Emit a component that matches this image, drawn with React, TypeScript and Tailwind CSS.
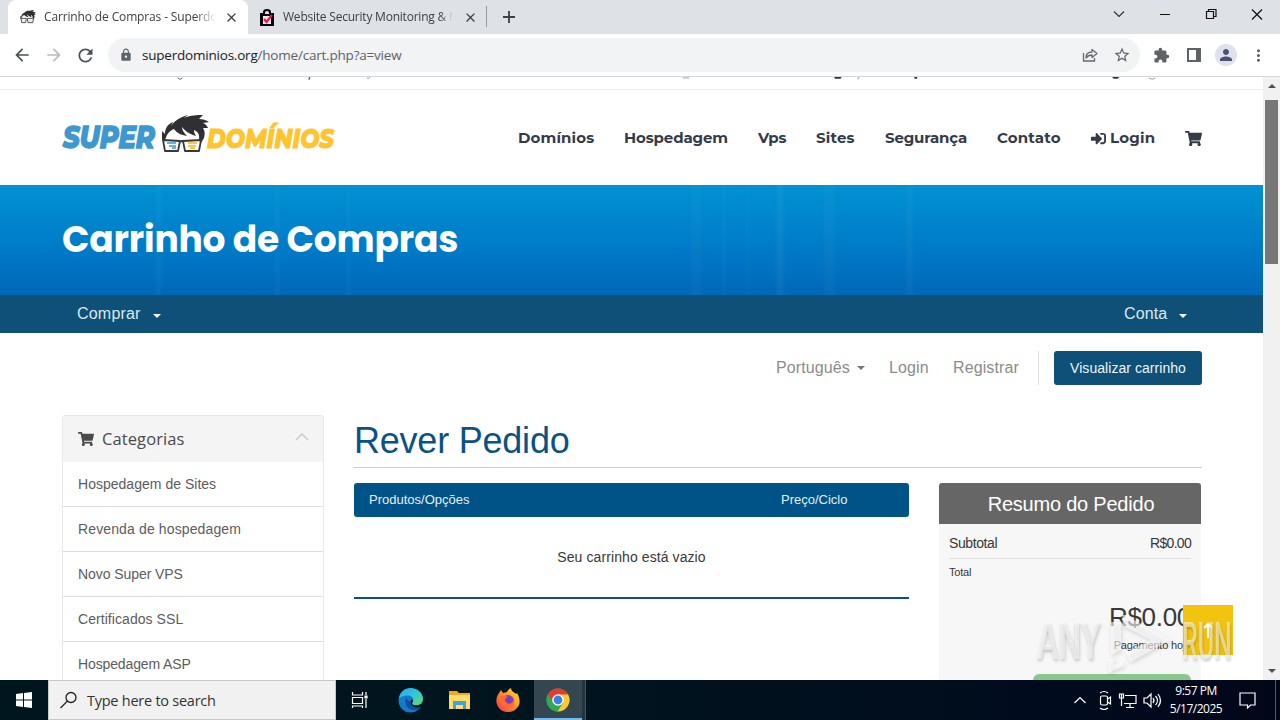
import React from "react";
import {
  MdArrowBack,
  MdArrowForward,
  MdClose,
  MdExtension,
  MdLock,
  MdMoreVert,
  MdPerson,
  MdRefresh,
  MdStarBorder,
} from "react-icons/md";
import { FaShoppingCart, FaSignInAlt } from "react-icons/fa";

const navItems = [
  { label: "Domínios", className: "w-[76px] tracking-[0.15px]" },
  { label: "Hospedagem", className: "w-[104px] tracking-[-0.12px]" },
  { label: "Vps", className: "w-[28px] tracking-[-0.3px]" },
  { label: "Sites", className: "w-[39px] tracking-[0.2px]" },
  { label: "Segurança", className: "w-[82px] tracking-[-0.15px]" },
  { label: "Contato", className: "w-[64px] tracking-[0.2px]" },
];

const categories = [
  { label: "Hospedagem de Sites", className: "tracking-[0.02px]" },
  { label: "Revenda de hospedagem", className: "tracking-[0.13px]" },
  { label: "Novo Super VPS", className: "tracking-[-0.07px]" },
  { label: "Certificados SSL", className: "tracking-[0.06px]" },
  { label: "Hospedagem ASP", className: "tracking-[-0.13px]" },
];

const Hair = () => (
  <path
    d="M1 26 L1 17 L4 20 C4 14 7 10 12 8 L10 12 C14 6 20 3 27 1 L23 4 C30 1 36 1 42 1 L38 5 C42 5 45 6 48 8 L42 9 C45 10 46 12 47 14 L42 14 C44 17 44 20 43 24 L40 29 L38 25 C39 20 36 17 33 16 C33 19 34 20 35 22 C28 20 24 17 21 13 C21 16 23 19 26 22 C20 21 16 19 13 15 C8 17 5 21 4 27 Z"
    fill="#303034"
  />
);

const Logo = () => (
  <svg width="290" height="42" viewBox="0 0 290 42" className="shrink-0">
    <text
      x="1"
      y="34"
      fontFamily="Montserrat, Inter, sans-serif"
      fontSize="30"
      fontWeight="800"
      fontStyle="italic"
      fill="#3d98d0"
      stroke="#3d98d0"
      strokeWidth="1.3"
      textLength="92"
      lengthAdjust="spacingAndGlyphs"
    >
      SUPER
    </text>
    <g transform="translate(99 0)">
      <Hair />
      <path
        d="M2 26 L19 27 L17 37 L4 37 Z M22 27 L40 26 L38 37 L24 37 Z M19 28 Q21 26 22 28"
        fill="#fff"
        stroke="#38383b"
        strokeWidth="1.8"
        strokeLinejoin="round"
      />
      <path d="M6 29h9M8 32h7M11 34h4" stroke="#64b5e6" strokeWidth="1.8" />
      <path d="M27 29h9M27 32h8M29 34h5" stroke="#fcc847" strokeWidth="1.8" />
    </g>
    <text
      x="145"
      y="34"
      fontFamily="Montserrat, Inter, sans-serif"
      fontSize="26.5"
      fontWeight="800"
      fontStyle="italic"
      fill="#ffc42e"
      stroke="#ffc42e"
      strokeWidth="0.9"
      textLength="127"
      lengthAdjust="spacingAndGlyphs"
    >
      DOMÍNIOS
    </text>
  </svg>
);

const TabStrip = () => (
  <div className="flex h-[34px] bg-[#dee1e6] pl-2 text-[12px] text-[#3c4043]">
    <div className="flex w-[240px] items-center rounded-t-lg bg-white pl-3">
      <svg width="16" height="16" viewBox="0 0 48 42" className="shrink-0">
        <Hair />
        <path d="M3 25h16l-2 13H5zM22 25h19l-3 13H24z" fill="#eee" stroke="#555" strokeWidth="3" />
      </svg>
      <div className="ml-2 w-[172px] overflow-hidden whitespace-nowrap tracking-[-0.14px] [mask-image:linear-gradient(to_right,black_88%,transparent)]">
        Carrinho de Compras - Superdominios
      </div>
      <MdClose size={15} className="ml-[8px] shrink-0" />
    </div>
    <div className="flex w-[239px] items-center border-r border-[#96999e] pl-[11px] [border-image:linear-gradient(to_bottom,transparent_20%,#96999e_20%_78%,transparent_78%)_1]">
      <svg width="16" height="17" viewBox="0 0 16 17" className="shrink-0">
        <path d="M1 4h3V3q0-3 4-3t4 3v1h3v13H1z" fill="#080808" />
        <path d="M6 5V3.500Q6 2 8 2t2 1.500V5z" fill="#dee1e6" />
        <path d="M4 7h8v8H4z" fill="#f5e6ea" />
        <path d="m5 10 2.500 3L13 6" fill="none" stroke="#e02249" strokeWidth="2.200" />
      </svg>
      <div className="ml-2 w-[170px] overflow-hidden whitespace-nowrap tracking-[-0.22px] [mask-image:linear-gradient(to_right,black_92%,transparent)]">
        Website Security Monitoring &amp; Malware
      </div>
      <MdClose size={15} className="ml-[10px] shrink-0" />
    </div>
    <div className="flex flex-1 items-center">
      <svg width="14" height="14" viewBox="0 0 14 14" className="ml-[15px]">
        <path d="M7 1v12M1 7h12" stroke="#3c4043" strokeWidth="1.800" />
      </svg>
    </div>
    <svg width="168" height="34" viewBox="0 0 168 34" fill="none" stroke="#111" className="shrink-0">
      <path d="m2 11.500 5 5 5-5" stroke="#333" strokeWidth="1.200" />
      <path d="M48 14.500h10" />
      <path d="M94.500 11.500h7v7h-7zM96.500 11V9.500h7.500v7h-2.500" strokeWidth="1.200" />
      <path d="m140 9.500 10 10M150 9.500l-10 10" strokeWidth="1.200" />
    </svg>
  </div>
);

const Toolbar = () => (
  <div className="flex h-[43px] items-center border-b border-[#d5d7d9] bg-white text-[#5f6368]">
    <MdArrowBack size={20} className="ml-3 shrink-0 text-[#4d5156]" />
    <MdArrowForward size={20} className="ml-3 shrink-0 text-[#b9bbbe]" />
    <MdRefresh size={21} className="ml-[11px] shrink-0 text-[#4d5156]" />
    <div className="ml-3 flex h-[34px] w-[1032px] items-center rounded-full bg-[#f1f3f4] pl-[11px]">
      <MdLock size={14} />
      <div className="ml-[9px] flex-1 whitespace-nowrap text-[13.500px] tracking-[-0.21px]">
        <span className="text-[#202124]">superdominios.org</span>/home/cart.php?a=view
      </div>
      <svg width="16" height="16" viewBox="0 0 16 16" fill="none" stroke="#666a6e" strokeWidth="1.300">
        <path d="M1.500 6v8h11v-3" />
        <path d="M4 11c0-4 2.500-6 6-6V2.500L15 6.500l-5 4V8C7 8 5.500 9 4 11z" strokeLinejoin="round" />
      </svg>
      <MdStarBorder size={18} className="mr-[9px] ml-[15px]" />
    </div>
    <MdExtension size={17} className="ml-[13px] shrink-0" />
    <svg width="14" height="14" viewBox="0 0 14 14" className="ml-[17px] shrink-0">
      <path d="M1 1h12v12H1z" fill="none" stroke="#5f6368" strokeWidth="2" />
      <path d="M9 1h4v12H9z" fill="#5f6368" />
    </svg>
    <div className="ml-[14px] flex size-[22px] shrink-0 items-center justify-center rounded-full bg-[#dfe1ec] text-[#4c5273]">
      <MdPerson size={18} />
    </div>
    <MdMoreVert size={19} className="ml-3 shrink-0" />
  </div>
);

/* bottom edge of the contact bar, nearly scrolled out of view */
const ContactBar = () => (
  <svg width="1263" height="13" viewBox="0 0 1263 13" className="block border-b border-[#ececec]">
    <path d="M140 1q3 3 5 0" fill="none" stroke="#555" />
    <path d="m283 0-1 3" stroke="#2f5fc4" strokeWidth="1.500" />
    <path d="M345 1q2 2 3-1M876 2q2 0 2-2M1192 1q4 3 7 0M687 1h7" fill="none" stroke="#999" />
    <path d="M851 0h8l-1 2h-6zM938 0h3v2h-3zM1152 0h8l-2 2h-4z" fill="#333" />
  </svg>
);

const SiteHeader = () => (
  <header className="flex h-[95px] items-center bg-white pl-[62px]">
    <div className="w-[456px] pb-[6px]">
      <Logo />
    </div>
    <nav className="flex items-center gap-[30px] pt-[2px] font-[Montserrat,Inter,sans-serif] text-[15px] font-bold whitespace-nowrap text-[#343a48]">
      {navItems.map((item) => (
        <a key={item.label} className={item.className}>
          {item.label}
        </a>
      ))}
      <a className="flex w-[64px] items-center gap-1">
        <FaSignInAlt size={15} className="shrink-0" />
        <span className="tracking-[0.2px]">Login</span>
      </a>
      <FaShoppingCart size={17} />
    </nav>
  </header>
);

const Banner = () => (
  <div className="flex h-[110px] items-center bg-[linear-gradient(90deg,transparent_154px,#ffffff07_157px_160px,transparent_163px_273px,#ffffff06_276px_278px,transparent_281px_345px,#ffffff05_347px_350px,transparent_352px_690px,#ffffff05_692px_700px,transparent_703px_722px,#ffffff08_724px,transparent_726px_745px,#ffffff05_747px,transparent_750px_774px,#ffffff0b_779px_781px,transparent_786px_822px,#ffffff07_826px_832px,transparent_836px_905px,#ffffff08_908px_911px,transparent_914px),linear-gradient(180deg,#0091d2_0%,#0083cc_38%,#0074c3_72%,#0068b7_100%)] pl-[62px]">
    <h1 className="font-[Poppins,Inter,sans-serif] text-[36px] font-bold tracking-[-0.18px] whitespace-nowrap text-white">
      Carrinho de Compras
    </h1>
  </div>
);

const Caret = ({ className }: { className?: string }) => (
  <span className={`border-x-4 border-t-4 border-x-transparent ${className}`} />
);

const AccountNav = () => (
  <div className="flex h-[38px] items-center justify-between bg-[#0e5077] pr-[76px] pl-[77px] text-base font-light text-[#dce9f0]">
    <div className="flex items-center">
      <span className="w-[76px] tracking-[0.2px]">Comprar</span>
      <Caret className="mt-[3px] border-t-white" />
    </div>
    <div className="flex items-center">
      <span className="w-[55px] tracking-[0.1px]">Conta</span>
      <Caret className="mt-[3px] border-t-white" />
    </div>
  </div>
);

const TopLinks = () => (
  <div className="mt-[18px] flex h-[34px] items-center whitespace-nowrap text-[#8c8c8c]">
    <div className="flex w-[113px] items-center">
      <span className="w-[81px] tracking-[0.1px]">Português</span>
      <Caret className="border-t-[#777]" />
    </div>
    <span className="w-[64px] tracking-[0.1px]">Login</span>
    <span className="w-[85px] tracking-[0.1px]">Registrar</span>
    <div className="h-[34px] w-[16px] border-l border-[#ddd]" />
    <button className="h-[34px] w-[148px] rounded-[3px] bg-[#0e5077] text-[14px] tracking-[0.05px] text-[#edf5fa]">
      Visualizar carrinho
    </button>
  </div>
);

const Categories = () => (
  <aside className="mt-[30px] h-[300px] w-[262px] rounded-t-[3px] border border-[#e8e8e8]">
    <div className="flex h-[46px] items-center bg-[#f4f4f4] pl-[15px] font-['Open_Sans',sans-serif] text-[#4b4b4b]">
      <FaShoppingCart size={16} />
      <span className="ml-2 w-[193px] text-[16.500px] tracking-[0.1px]">Categorias</span>
      <svg width="14" height="8" viewBox="0 0 14 8" className="mb-1">
        <path d="m1 7 6-6 6 6" fill="none" stroke="#ccc" strokeWidth="1.500" />
      </svg>
    </div>
    {categories.map((item) => (
      <div
        key={item.label}
        className="flex h-[45px] items-center border-b border-[#ddd] pl-[15px] text-[14px] text-[#5c5c5c]"
      >
        <span className={item.className}>{item.label}</span>
      </div>
    ))}
  </aside>
);

const CartTable = () => (
  <div className="w-[555px] border-b-2 border-[#0e5077]">
    <div className="flex h-[34px] items-center rounded-[3px] bg-[#005387] pl-[15px] text-[13px] text-[#e4eff6]">
      <span className="w-[412px]">Produtos/Opções</span>
      <span>Preço/Ciclo</span>
    </div>
    <div className="flex h-[80px] items-center justify-center text-[14px] tracking-[0.09px] text-[#383838]">
      Seu carrinho está vazio
    </div>
  </div>
);

const Summary = () => (
  <div className="h-[250px] w-[262px] rounded-[3px] bg-[#f7f7f7] text-[#383838]">
    <h2 className="flex h-[41px] items-center justify-center rounded-t-[3px] bg-[#666] pl-[2px] text-[20px] tracking-[-0.22px] text-white">
      Resumo do Pedido
    </h2>
    <div className="px-[10px]">
      <div className="flex h-[35px] items-center justify-between border-b border-[#ddd] pt-1 text-[14px]">
        <span className="tracking-[-0.4px]">Subtotal</span>
        <span className="tracking-[-0.7px]">R$0.00</span>
      </div>
      <div className="mt-[5px] text-[11px] leading-4 tracking-[-0.2px]">Total</div>
      <div className="mt-[19px] flex h-[36px] items-center justify-end text-[26px] tracking-[-0.3px]">R$0.00</div>
      <div className="mt-[2px] flex h-[17px] items-center justify-end text-[11px] tracking-[-0.2px]">Pagamento hoje</div>
      <div className="mt-[20px] ml-[84px] h-9 rounded-md bg-[#89c88c]" />
    </div>
  </div>
);

const Watermark = () => (
  <div className="absolute top-[612px] left-[1037px] flex h-[60px] w-[200px] items-center font-[Roboto,sans-serif] text-[52px] leading-none font-medium text-white/55 [text-shadow:1px_2px_4px_#00000038]">
    <div className="w-[70px]">
      <span className="inline-block origin-left scale-x-[0.62]">ANY</span>
    </div>
    <svg width="75" height="60" viewBox="0 0 75 60" className="shrink-0 drop-shadow-[1px_2px_2px_#00000038]">
      <path d="M4 10h10v28L4 43z" fill="#fff" opacity="0.6" />
      <path d="M18 3v9l32 16L20 43M4 47v10l12-5M22 48 58 28 18 6" fill="none" stroke="#fff" strokeWidth="5" opacity="0.6" />
    </svg>
    <div className="w-[52px]">
      <span className="inline-block origin-left scale-x-[0.48]">RUN</span>
    </div>
  </div>
);

const Scrollbar = () => (
  <div className="flex w-[17px] flex-col items-center justify-between bg-[#f1f1f1] pb-[7px]">
    <div className="flex flex-col items-center">
      <span className="mt-[7px] mb-[12px] border-x-[4px] border-b-4 border-x-transparent border-b-[#505050]" />
      <div className="h-[164px] w-[13px] bg-[#777]" />
    </div>
    <Caret className="border-t-[#505050]" />
  </div>
);

const Taskbar = () => (
  <div className="flex h-10 bg-[linear-gradient(90deg,#00161f_0%,#00141e_45%,#000b1d_85%,#020619_100%)] font-['Open_Sans',sans-serif] text-white">
    <div className="flex w-[48px] items-center justify-center">
      <svg width="16" height="16" viewBox="0 0 16 16" fill="#fff">
        <path d="m0 2 7-1v6.500H0zM8 1l8-1v7.500H8zM0 8.500h7V15l-7-1zM8 8.500h8V16l-8-1z" />
      </svg>
    </div>
    <div className="flex w-[288px] items-center border border-[#c8c8c8] bg-[#f1f1f1] pl-[11px] text-[#333]">
      <svg width="18" height="18" viewBox="0 0 18 18" fill="none" stroke="#222" strokeWidth="1.300">
        <circle cx="11" cy="6.500" r="5" />
        <path d="m7.500 10-7 7" />
      </svg>
      <span className="ml-[9px] pt-[1px] text-[14.500px] tracking-[-0.25px]">Type here to search</span>
    </div>
    <div className="flex w-[48px] items-center justify-center">
      <svg width="18" height="18" viewBox="0 0 18 18" fill="none" stroke="#fff" strokeWidth="1.200">
        <path d="M1.500 1v3h10V1M1.500 6.500h10v6h-10zM1.500 17v-2h10v2M15 1v3M15 8v9" />
        <path d="M14 5h2v2h-2z" fill="#fff" />
      </svg>
    </div>
    <div className="flex w-[53px] items-center justify-center">
      <svg width="25" height="25" viewBox="0 0 26 26">
        <defs>
          <linearGradient id="edgeTop" x1="0" y1="0" x2="1" y2="1">
            <stop offset="0" stopColor="#24a9e8" />
            <stop offset="0.500" stopColor="#34c6da" />
            <stop offset="1" stopColor="#68dc60" />
          </linearGradient>
        </defs>
        <circle cx="13" cy="13" r="12.500" fill="#137bce" />
        <path d="M1 11C2 4 7 0 13 0c8 0 13 6 13 11 0 4-3 7-7 7-3 0-5-1-4-3 2-2 1-6-3-7-5-1-9 1-11 3z" fill="url(#edgeTop)" />
        <path d="M9 9c-3 5-1 12 6 14 4 1 7-1 9-3-4 1-11-1-10-7-2 1-5 0-5-4z" fill="#0d529d" />
        <path d="M14 12c-2 3 0 7 4 8 3 1 5 0 7-1l1-1v-3c-2 2-5 3-7 3-3 0-5-1-4-3 1-1 1-3-1-3z" fill="#00141e" />
      </svg>
    </div>
    <div className="flex w-[45px] items-center justify-center">
      <svg width="21" height="20" viewBox="0 0 21 20">
        <path d="M0 1h8l2 2h11v16H0z" fill="#eda927" />
        <path d="M0 5h21v14H0z" fill="#ffdb69" />
        <path d="M4 11h13v8h-3v-4H7v4H4z" fill="#48a0d8" />
      </svg>
    </div>
    <div className="flex w-[52px] items-center justify-center">
      <svg width="24" height="24" viewBox="0 0 24 24">
        <defs>
          <linearGradient id="fox" x1="1" y1="0" x2="0" y2="1">
            <stop offset="0" stopColor="#ffe13b" />
            <stop offset="0.450" stopColor="#ff9428" />
            <stop offset="1" stopColor="#f02e58" />
          </linearGradient>
        </defs>
        <path d="M3 5 5 2l2 3 4-1c1-2 2-3 4-4 0 3 3 4 5 6l1-1c3 5 4 11 0 15-5 6-14 5-18 0C-1 15 0 9 3 5z" fill="url(#fox)" />
        <circle cx="12" cy="13" r="6" fill="#7541bf" />
        <path d="M5 8c3-1 5 0 7 1-3 1-4 3-2 5 2 3 7 2 7-2 3 4 0 8-5 8-6 0-9-6-7-12z" fill="#ff6a32" />
      </svg>
    </div>
    <div className="flex w-[48px] items-center justify-center border-b-2 border-[#76b9ed] bg-[#344750] pt-[2px]">
      <svg width="24" height="24" viewBox="0 0 24 24">
        <circle cx="12" cy="12" r="11.500" fill="#31a852" />
        <path d="M12 12 2 6.250A11.500 11.500 0 0 1 22 6.250z" fill="#e33b2e" />
        <path d="M12 6.500h10.100A11.500 11.500 0 0 1 11.500 23.500L17 15z" fill="#fcc934" />
        <path d="m2 6.250 5.200 9L12 12 11 4z" fill="#e33b2e" />
        <path d="m2 6.250 5.200 9L12 18l-1 5.500A11.500 11.500 0 0 1 2 6.250z" fill="#31a852" />
        <circle cx="12" cy="12" r="5.800" fill="#fff" />
        <circle cx="12" cy="12" r="4.400" fill="#367fe8" />
      </svg>
    </div>
    <div className="w-1 border-r border-[#44555d] bg-[#22343e]" />
    <div className="flex-1" />
    <div className="flex w-[92px] items-center">
      <svg width="92" height="20" viewBox="0 0 92 20" fill="none" stroke="#fff" strokeWidth="1.200">
        <path d="m1.500 13 5.500-5.500 5.500 5.500" />
        <rect x="27.500" y="6" width="7" height="9" rx="1.500" />
        <path d="m34.500 9 3-2v7l-3-2M27 3q4-3 8 0M27 18q4 3 8 0" />
        <path d="M52 5.500h11v8H51M57 13.500v4M53 17.500h8M48.500 4v12M46.500 4h4v4h-4z" />
        <path d="M71 8h3l4-4v13l-4-4h-3zM80 8q2 2.500 0 5M82.500 6q4 4.500 0 9M85 4q5 6.500 0 13" />
      </svg>
    </div>
    <div className="w-[62px] text-center text-[12px] leading-[18px] tracking-[-0.5px] whitespace-nowrap">
      <div className="pt-[2px]">9:57 PM</div>
      <div>5/17/2025</div>
    </div>
    <div className="flex w-[49px] items-center border-r border-[#505765] pl-[12px]">
      <svg width="18" height="18" viewBox="0 0 18 18" fill="none" stroke="#fff" strokeWidth="1.200">
        <path d="M1 2h15v12h-4.500l-3 3v-3H1z" />
      </svg>
    </div>
    <div className="w-1" />
  </div>
);

export default function App() {
  return (
    <div className="relative flex h-[720px] w-[1280px] flex-col overflow-hidden bg-white font-['Open_Sans',sans-serif]">
      <TabStrip />
      <Toolbar />
      <div className="flex h-[603px] overflow-hidden">
        <main className="h-[603px] w-[1263px] overflow-hidden font-['Liberation_Sans',sans-serif]">
          <ContactBar />
          <SiteHeader />
          <Banner />
          <AccountNav />
          <div className="flex w-[1202px] justify-end">
            <TopLinks />
          </div>
          <div className="flex gap-[30px] pl-[62px]">
            <Categories />
            <section className="w-[848px]">
              <h1 className="mt-[30px] flex h-[53px] items-center border-b border-[#ccc] text-[36px] tracking-[-0.22px] whitespace-nowrap text-[#0b5284]">
                Rever Pedido
              </h1>
              <div className="mt-[15px] flex items-start gap-[30px]">
                <CartTable />
                <Summary />
              </div>
            </section>
          </div>
        </main>
        <Scrollbar />
      </div>
      <Taskbar />
      {/* back to top */}
      <button className="absolute top-[605px] left-[1183px] flex size-[50px] items-center justify-center bg-[#f2c40f]">
        <svg width="10" height="17" viewBox="0 0 10 17">
          <path d="M5 16V2M1 6l4-4 4 4" fill="none" stroke="#fff" strokeWidth="2" />
        </svg>
      </button>
      <Watermark />
    </div>
  );
}
